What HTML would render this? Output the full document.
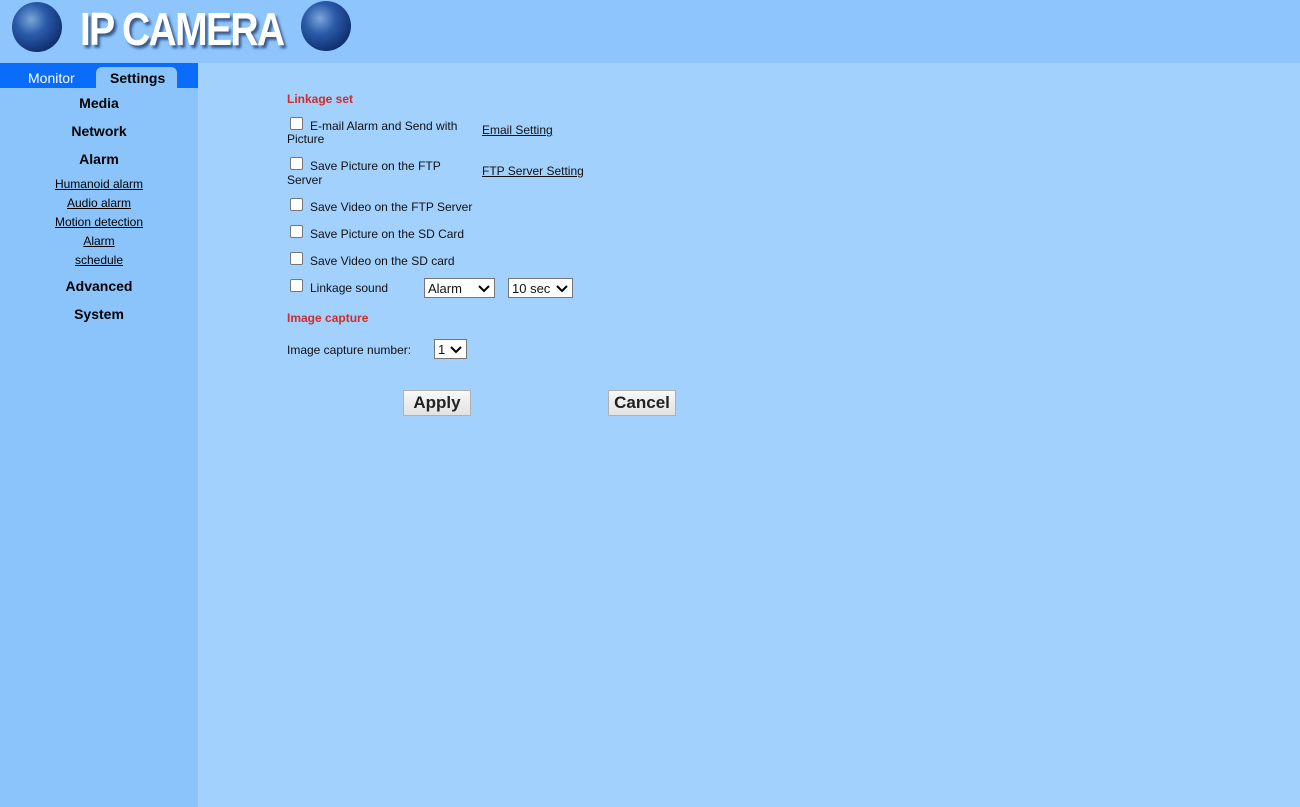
<!DOCTYPE html>
<html><head><style>
*{margin:0;padding:0;box-sizing:border-box}
body{width:1300px;height:807px;background:#a2d1fd;font-family:"Liberation Sans",Arial,sans-serif;position:relative;overflow:hidden;font-size:12px;color:#111}
.a{position:absolute;white-space:nowrap}
#hdr{left:0;top:0;width:1300px;height:63px;background:#8dc5fc}
#side{left:0;top:63px;width:198px;height:744px;background:#8bc4fb}
#tabs{left:0;top:63px;width:198px;height:25px;background:#0a6cfa}
.globe{width:50px;height:50px;border-radius:50%;background:radial-gradient(circle at 38% 35%,#7aa6d8 0%,#2a5aa8 35%,#0f2f70 75%,#0a1f4a 100%)}
.nav{left:0;width:198px;text-align:center;font-weight:bold;font-size:14px;color:#000}
.sub{left:0;width:198px;text-align:center;text-decoration:underline;font-size:12px;color:#000}
.cb{width:13px;height:13px;border:1px solid #767676;background:#fff;border-radius:2px}
.red{color:#d32a2a;font-weight:bold;font-size:12px}
.lnk{text-decoration:underline}
.sel{border:1px solid #767676;background:#fff;height:20px;font-size:13px;padding:2px 3px;line-height:15px}
.sel svg{position:absolute;right:4px;top:6px}
.btn{border:1px solid #b0b0b0;background:linear-gradient(#f8f8f8,#e2e2e2);font-weight:bold;font-size:17px;text-align:center;line-height:24px;height:26px;color:#222}
</style></head><body>
<div class="a" id="hdr"></div>
<div class="a globe" style="left:12px;top:2px"></div>
<div class="a globe" style="left:301px;top:1px"></div>
<div class="a" style="left:80px;top:2px;font-size:46px;font-weight:bold;color:#fff;letter-spacing:-2px;text-shadow:3px 3px 3px #3a5a8a;transform:scaleX(0.85);transform-origin:left">IP CAMERA</div>
<div class="a" id="side"></div>
<div class="a" id="tabs"></div>
<div class="a" style="left:28px;top:70px;font-size:14px;color:#fff">Monitor</div>
<div class="a" style="left:96px;top:67px;width:81px;height:21px;background:#8bc4fb;border-radius:6px 6px 0 0"></div>
<div class="a" style="left:110px;top:70px;font-size:14px;font-weight:bold;color:#000">Settings</div>
<div class="a nav" style="top:95px">Media</div>
<div class="a nav" style="top:123px">Network</div>
<div class="a nav" style="top:151px">Alarm</div>
<div class="a sub" style="top:177px">Humanoid alarm</div>
<div class="a sub" style="top:196px">Audio alarm</div>
<div class="a sub" style="top:215px">Motion detection</div>
<div class="a sub" style="top:234px">Alarm</div>
<div class="a sub" style="top:253px">schedule</div>
<div class="a nav" style="top:278px">Advanced</div>
<div class="a nav" style="top:306px">System</div>

<div class="a red" style="left:287px;top:92px">Linkage set</div>
<div class="a cb" style="left:290px;top:117px"></div>
<div class="a" style="left:310px;top:119px">E-mail Alarm and Send with</div>
<div class="a" style="left:287px;top:132px">Picture</div>
<div class="a lnk" style="left:482px;top:123px">Email Setting</div>
<div class="a cb" style="left:290px;top:157px"></div>
<div class="a" style="left:310px;top:159px">Save Picture on the FTP</div>
<div class="a" style="left:287px;top:173px">Server</div>
<div class="a lnk" style="left:482px;top:164px">FTP Server Setting</div>
<div class="a cb" style="left:290px;top:198px"></div>
<div class="a" style="left:310px;top:200px">Save Video on the FTP Server</div>
<div class="a cb" style="left:290px;top:225px"></div>
<div class="a" style="left:310px;top:227px">Save Picture on the SD Card</div>
<div class="a cb" style="left:290px;top:252px"></div>
<div class="a" style="left:310px;top:254px">Save Video on the SD card</div>
<div class="a cb" style="left:290px;top:279px"></div>
<div class="a" style="left:310px;top:281px">Linkage sound</div>
<div class="a sel" style="left:424px;top:278px;width:71px">Alarm<svg width="12" height="8"><path d="M1 1L6 6L11 1" stroke="#000" stroke-width="2" fill="none"/></svg></div>
<div class="a sel" style="left:508px;top:278px;width:65px">10 sec<svg width="12" height="8"><path d="M1 1L6 6L11 1" stroke="#000" stroke-width="2" fill="none"/></svg></div>
<div class="a red" style="left:287px;top:311px">Image capture</div>
<div class="a" style="left:287px;top:343px">Image capture number:</div>
<div class="a sel" style="left:434px;top:339px;width:33px">1<svg width="12" height="8"><path d="M1 1L6 6L11 1" stroke="#000" stroke-width="2" fill="none"/></svg></div>
<div class="a btn" style="left:403px;top:390px;width:68px">Apply</div>
<div class="a btn" style="left:608px;top:390px;width:68px">Cancel</div>
</body></html>
